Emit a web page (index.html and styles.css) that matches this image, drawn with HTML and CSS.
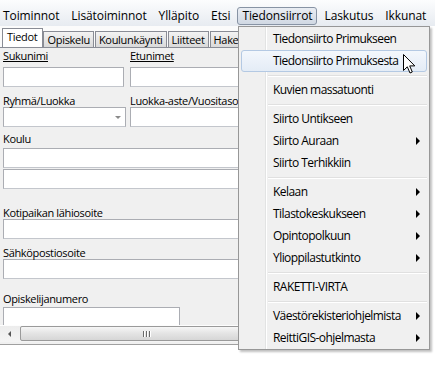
FILE: index.html
```html
<!DOCTYPE html>
<html lang="fi">
<head>
  <meta charset="UTF-8" />
  <title>Oppilastiedot</title>
  <link rel="stylesheet" href="styles.css">
</head>
<body>
  <div class="screen">
    <div class="menubar">
      <span class="menubar-item">Toiminnot</span>
      <span class="menubar-item">Lisätoiminnot</span>
      <span class="menubar-item">Ylläpito</span>
      <span class="menubar-item">Etsi</span>
      <span class="menubar-item is-open">Tiedonsiirrot</span>
      <span class="menubar-item">Laskutus</span>
      <span class="menubar-item">Ikkunat</span>
    </div>

    <div class="tabstrip">
      <span class="tab is-active">Tiedot</span>
      <span class="tab">Opiskelu</span>
      <span class="tab">Koulunkäynti</span>
      <span class="tab">Liitteet</span>
      <span class="tab">Hake</span>
    </div>

    <div class="panel">
      <div class="fields">
        <div class="row group-names">
          <div class="col">
            <span class="label is-required">Sukunimi</span>
            <div class="textbox box-left"></div>
          </div>
          <div class="col">
            <span class="label is-required">Etunimet</span>
            <div class="textbox box-wide"></div>
          </div>
        </div>

        <div class="row group-combos">
          <div class="col">
            <span class="label">Ryhmä/Luokka</span>
            <div class="combo box-combo"><span class="combo-arrow"></span></div>
          </div>
          <div class="col">
            <span class="label">Luokka-aste/Vuositaso</span>
            <div class="combo box-wide"><span class="combo-arrow"></span></div>
          </div>
        </div>

        <div class="group group-school">
          <span class="label">Koulu</span>
          <div class="textbox box-full"></div>
          <div class="textbox box-full next"></div>
        </div>

        <div class="group group-address">
          <span class="label">Kotipaikan lähiosoite</span>
          <div class="textbox box-full"></div>
        </div>

        <div class="group group-email">
          <span class="label">Sähköpostiosoite</span>
          <div class="textbox box-full"></div>
        </div>

        <div class="group group-number">
          <span class="label">Opiskelijanumero</span>
          <div class="textbox box-number"></div>
        </div>
      </div>

      <div class="hscroll">
        <div class="scroll-btn"><span class="scroll-arrow"></span></div>
        <div class="scroll-thumb"><span class="grip"></span><span class="grip"></span><span class="grip"></span></div>
      </div>
    </div>

    <div class="dropdown">
      <div class="dropdown-item">Tiedonsiirto Primukseen</div>
      <div class="dropdown-item is-hover">Tiedonsiirto Primuksesta</div>
      <div class="dropdown-sep"></div>
      <div class="dropdown-item">Kuvien massatuonti</div>
      <div class="dropdown-sep"></div>
      <div class="dropdown-item">Siirto Untikseen</div>
      <div class="dropdown-item">Siirto Auraan <span class="submenu-arrow"></span></div>
      <div class="dropdown-item">Siirto Terhikkiin</div>
      <div class="dropdown-sep"></div>
      <div class="dropdown-item">Kelaan <span class="submenu-arrow"></span></div>
      <div class="dropdown-item">Tilastokeskukseen <span class="submenu-arrow"></span></div>
      <div class="dropdown-item">Opintopolkuun <span class="submenu-arrow"></span></div>
      <div class="dropdown-item">Ylioppilastutkinto <span class="submenu-arrow"></span></div>
      <div class="dropdown-sep"></div>
      <div class="dropdown-item">RAKETTI-VIRTA</div>
      <div class="dropdown-sep"></div>
      <div class="dropdown-item">Väestörekisteriohjelmista <span class="submenu-arrow"></span></div>
      <div class="dropdown-item">ReittiGIS-ohjelmasta <span class="submenu-arrow"></span></div>
    </div>

    <svg class="cursor" width="13" height="20" viewBox="0 0 13 20">
      <path d="M0.5 0.5 L0.5 16.5 L4.3 12.8 L7 19 L9.3 18 L6.7 11.9 L11.8 11.9 Z" fill="#fff" stroke="#000" stroke-width="1" stroke-linejoin="miter" />
    </svg>
  </div>
</body>
</html>
```

FILE: styles.css
```css
body {
  margin: 0;
  width: 435px;
  height: 381px;
  overflow: hidden;
  background: #fff;
  color: #000;
  font-family: "Open Sans", "Noto Sans", sans-serif;
}

.screen {
  position: relative;
  height: 381px;
}

/* menu bar */
.menubar {
  display: flex;
  gap: 2px;
  height: 26px;
  box-sizing: border-box;
  padding-top: 7px;
  background: linear-gradient(#fcfdfe, #e7ebf1);
}

.menubar-item {
  height: 18px;
  box-sizing: border-box;
  padding: 0 4px;
  border: 1px solid transparent;
  border-radius: 3px;
  font-size: 12px;
  line-height: 16px;
  letter-spacing: -0.1px;
  white-space: nowrap;
}

.menubar-item:first-child {
  padding-left: 2px;
}

.menubar-item.is-open {
  border-color: #8793a4;
  background: linear-gradient(#e9edf3, #d0d8e3);
}

/* tabs */
.tabstrip {
  display: flex;
  align-items: flex-end;
  width: 239px;
  height: 21px;
  box-sizing: border-box;
  padding-left: 2px;
  background: #fbfbfb;
  overflow: hidden;
}

.tab {
  height: 15px;
  margin-right: 1px;
  padding: 0 3px;
  border: 1px solid #898c95;
  border-bottom: 0;
  background: linear-gradient(#f3f3f3, #e6e6e6 50%, #dadada);
  font-size: 11px;
  line-height: 15px;
  letter-spacing: -0.3px;
  white-space: nowrap;
}

.tab.is-active {
  position: relative;
  z-index: 1;
  height: 19px;
  margin-bottom: -1px;
  margin-right: 0;
  padding: 0 5px 0 4px;
  background: #fff;
}

/* form panel */
.panel {
  display: flex;
  flex-direction: column;
  width: 239px;
  height: 298px;
  box-sizing: border-box;
  padding-bottom: 2px;
  border-top: 1px solid #898c95;
  border-bottom: 1px solid #a0a0a0;
  background: #f0f0f0;
  overflow: hidden;
}

.fields {
  height: 277px;
  flex-shrink: 0;
  box-sizing: border-box;
  padding: 1px 0 0 3px;
  overflow: hidden;
}

.row {
  display: flex;
}

.col {
  width: 127px;
  flex-shrink: 0;
}

.label {
  display: block;
  font-size: 11px;
  line-height: 13px;
  letter-spacing: -0.35px;
  white-space: nowrap;
}

.label.is-required {
  text-decoration: underline;
}

.textbox,
.combo {
  height: 20px;
  box-sizing: border-box;
  border: 1px solid #abadb3;
  border-bottom-color: #c3c6cc;
  background: #fff;
}

.combo {
  display: flex;
  justify-content: flex-end;
  align-items: center;
  padding-right: 4px;
}

.combo-arrow {
  width: 0;
  height: 0;
  border-left: 3px solid transparent;
  border-right: 3px solid transparent;
  border-top: 3px solid #8a8a8a;
}

.box-left { width: 121px; }
.box-combo { width: 123px; }
.box-wide { width: 150px; }
.box-full { width: 250px; }
.box-number { width: 177px; }

.group-names .textbox { margin-top: 5px; }
.group-combos { margin-top: 7px; }
.group-school { margin-top: 5px; }
.group-school .textbox { margin-top: 3px; }
.group-school .textbox.next { margin-top: 1px; }
.group-address { margin-top: 17px; }
.group-email { margin-top: 7px; }
.group-number { margin-top: 13px; }
.group-number .textbox { margin-top: 2px; }

/* horizontal scrollbar */
.hscroll {
  display: flex;
  height: 17px;
  flex-shrink: 0;
  border-top: 1px solid #fdfdfd;
  box-sizing: border-box;
  background: linear-gradient(#ececec, #f4f4f4);
}

.scroll-btn {
  display: flex;
  justify-content: center;
  align-items: center;
  width: 19px;
  flex-shrink: 0;
}

.scroll-arrow {
  width: 0;
  height: 0;
  border-top: 3px solid transparent;
  border-bottom: 3px solid transparent;
  border-right: 3px solid #555;
}

.scroll-thumb {
  display: flex;
  justify-content: center;
  align-items: center;
  gap: 1px;
  width: 254px;
  flex-shrink: 0;
  box-sizing: border-box;
  margin: 0 0 1px 1px;
  border: 1px solid #9a9a9a;
  border-radius: 2px;
  background: linear-gradient(#f6f6f6, #e4e4e4 50%, #d6d6d6);
}

.grip {
  width: 1px;
  height: 6px;
  background: #6a6a6a;
  border-right: 1px solid #fff;
}

/* drop-down menu */
.dropdown {
  position: absolute;
  left: 238px;
  top: 26px;
  width: 192px;
  box-sizing: border-box;
  padding: 1px 2px 0;
  border: 1px solid #979797;
  background:
    linear-gradient(to right, transparent 26px, #e2e3e3 26px, #e2e3e3 27px, #fff 27px, #fff 28px, transparent 28px),
    #f0f0f0;
  box-shadow: 2px 2px 2px rgba(0, 0, 0, 0.25);
  font-size: 12px;
  letter-spacing: -0.55px;
}

.dropdown-item {
  display: flex;
  justify-content: space-between;
  align-items: center;
  height: 22px;
  box-sizing: border-box;
  padding: 0 6px 0 31px;
  border: 1px solid transparent;
  border-radius: 3px;
  line-height: 20px;
  white-space: nowrap;
}

.dropdown-item.is-hover {
  border-color: #b4c9e3;
  background: linear-gradient(#f3f7fc, #e4ecf6);
}

.dropdown-sep {
  height: 7px;
  margin-left: 27px;
  background: linear-gradient(transparent 3px, #e0e0e0 3px, #e0e0e0 4px, #fff 4px, #fff 5px, transparent 5px);
}

.submenu-arrow {
  width: 0;
  height: 0;
  border-top: 4px solid transparent;
  border-bottom: 4px solid transparent;
  border-left: 4px solid #000;
}

.cursor {
  position: absolute;
  left: 403px;
  top: 54px;
}
```
